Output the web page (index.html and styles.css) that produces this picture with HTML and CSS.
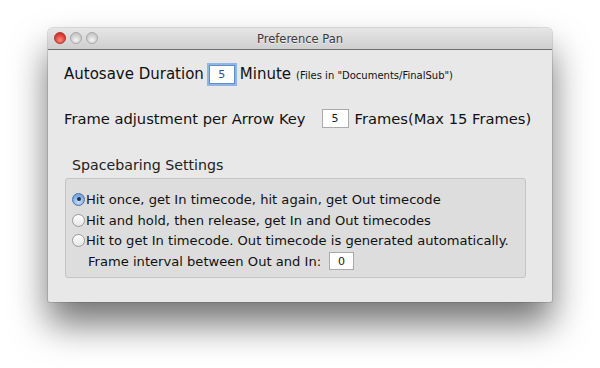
FILE: index.html
```html
<!DOCTYPE html>
<html>
<head>
<meta charset="utf-8">
<link rel="stylesheet" href="styles.css">
</head>
<body>
<div class="window">
  <div class="titlebar">
    <div class="lights">
      <span class="light close"></span>
      <span class="light mini"></span>
      <span class="light zoom"></span>
    </div>
    <div class="title">Preference Pan</div>
  </div>
  <div class="content">
    <div class="row row1">
      <span class="big">Autosave Duration</span>
      <span class="field focus">5</span>
      <span class="big">Minute</span>
      <span class="small">(Files in "Documents/FinalSub")</span>
    </div>
    <div class="row row2">
      <span class="mid">Frame adjustment per Arrow Key</span>
      <span class="field f2">5</span>
      <span class="mid">Frames(Max 15 Frames)</span>
    </div>
    <div class="group-label">Spacebaring Settings</div>
    <div class="group">
      <div class="opt"><span class="radio on"></span><span>Hit once, get In timecode, hit again, get Out timecode</span></div>
      <div class="opt"><span class="radio"></span><span>Hit and hold, then release, get In and Out timecodes</span></div>
      <div class="opt"><span class="radio"></span><span>Hit to get In timecode. Out timecode is generated automatically.</span></div>
      <div class="opt sub"><span>Frame interval between Out and In:</span><span class="field f3">0</span></div>
    </div>
  </div>
</div>
</body>
</html>
```
FILE: styles.css
```css
html, body {
  margin: 0;
  padding: 0;
  background: #ffffff;
  width: 600px;
  height: 368px;
  overflow: hidden;
}
body {
  font-family: "DejaVu Sans", "Noto Sans", sans-serif;
  color: #111;
  padding-top: 28px;
  box-sizing: border-box;
}
.window {
  margin-left: 48px;
  width: 504px;
  background: #e8e8e8;
  border-radius: 5px 5px 2px 2px;
  box-shadow: 0 22px 36px rgba(0,0,0,0.55), 0 0 0 1px rgba(0,0,0,0.12);
}
.titlebar {
  height: 21px;
  position: relative;
  background: linear-gradient(#e6e6e6, #cfcfcf);
  border-bottom: 1px solid #6f6f6f;
  border-radius: 5px 5px 0 0;
  display: flex;
  align-items: center;
  justify-content: center;
}
.lights {
  position: absolute;
  left: 6px;
  top: 4px;
  display: flex;
  gap: 4px;
}
.light {
  width: 12px;
  height: 12px;
  border-radius: 50%;
  box-sizing: border-box;
  border: 1px solid #a8a8a8;
  background: radial-gradient(circle at 50% 70%, #f4f4f4, #c8c8c8 70%);
}
.light.close {
  border-color: #b5312a;
  background: radial-gradient(circle at 50% 70%, #ff8a80, #e0443a 55%, #b8261f);
}
.title {
  font-size: 11.5px;
  color: #3a3a3a;
  text-shadow: 0 1px 0 rgba(255,255,255,0.6);
}
.content {
  padding: 12px 16px 24px 16px;
  display: flex;
  flex-direction: column;
}
.row {
  display: flex;
  align-items: center;
  height: 24px;
  white-space: nowrap;
}
.big {
  font-size: 15px;
}
.mid {
  font-size: 14.7px;
}
.small {
  font-size: 10px;
  margin-left: 5px;
  padding-top: 3px;
}
.field {
  display: inline-flex;
  align-items: center;
  justify-content: center;
  background: #fff;
  border: 1px solid #aaa;
  box-sizing: border-box;
  font-size: 11px;
  color: #222;
}
.field.focus {
  width: 26px;
  height: 19px;
  margin: 0 5px 0 5px;
  border: 1px solid #5f8fc9;
  box-shadow: 0 0 0 2px #8fb4e6;
  color: #2a4f9a;
}
.row2 {
  margin-top: 20px;
}
.field.f2 {
  width: 27px;
  height: 19px;
  margin: 0 6px 0 16px;
}
.group-label {
  margin-top: 27px;
  margin-left: 8px;
  font-size: 14.2px;
  height: 17px;
  line-height: 17px;
  color: #222;
}
.group {
  margin-top: 4px;
  margin-left: 1px;
  width: 461px;
  box-sizing: border-box;
  background: #dddddd;
  border: 1px solid #c4c4c4;
  border-radius: 3px;
  padding: 10px 0 5px 6px;
  display: flex;
  flex-direction: column;
}
.opt {
  display: flex;
  align-items: center;
  height: 20.7px;
  font-size: 13.1px;
  white-space: nowrap;
}
.radio {
  width: 13px;
  height: 13px;
  border-radius: 50%;
  box-sizing: border-box;
  border: 1px solid #9a9a9a;
  background: linear-gradient(#ffffff, #e6e6e6);
  margin-right: 1px;
  position: relative;
}
.radio.on {
  border-color: #4c6fa8;
  background: radial-gradient(circle at 50% 70%, #c8e0fb, #7aa6de 70%);
}
.radio.on::after {
  content: "";
  position: absolute;
  left: 3.5px;
  top: 3.5px;
  width: 4px;
  height: 4px;
  border-radius: 50%;
  background: #1d2f4f;
}
.opt.sub {
  padding-left: 16px;
}
.field.f3 {
  width: 25px;
  height: 18px;
  margin-left: 8px;
}
```
